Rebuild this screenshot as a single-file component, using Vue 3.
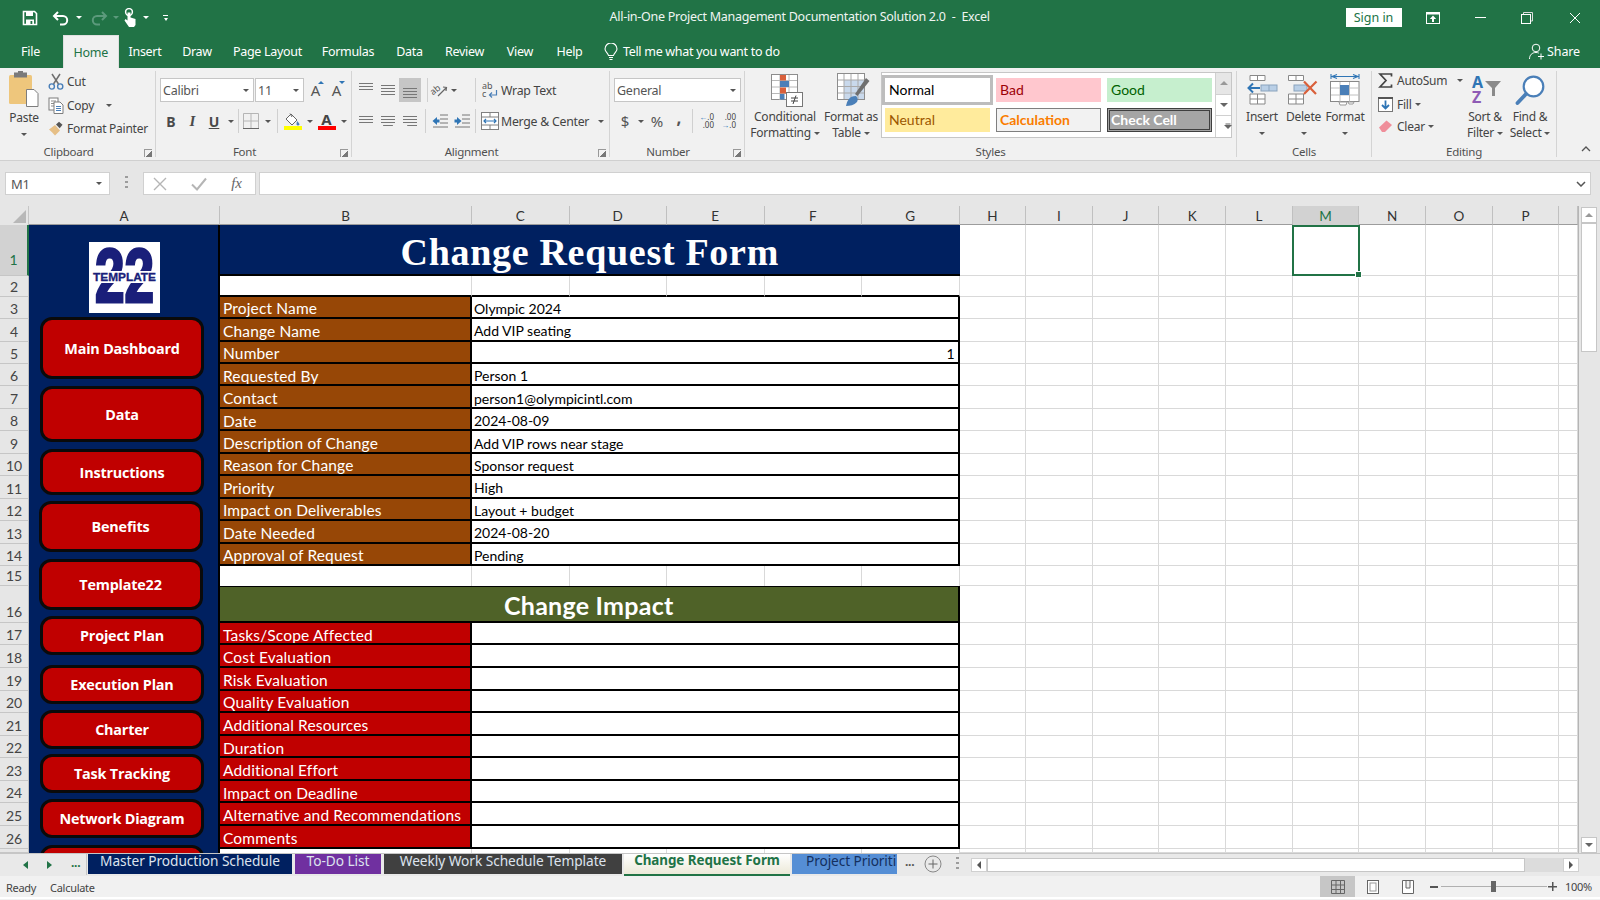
<template>
  <div class="excel">
    <!-- title bar -->
    <div class="titlebar">
      <div class="qat">
        <svg class="q-save" width="16" height="16" viewBox="0 0 16 16"><path d="M1.5 1.5h11l2 2v11h-13z" fill="none" stroke="#fff" stroke-width="1.6"/><rect x="4" y="2" width="7" height="4" fill="#fff"/><rect x="4" y="9.5" width="8" height="5" fill="#fff"/><rect x="8.5" y="11" width="1.8" height="3" fill="#217346"/></svg>
        <svg class="q-undo" width="18" height="16" viewBox="0 0 18 16"><path d="M6 2 2 6l4 4M2.5 6H11a4 4 0 0 1 0 8.400H8" fill="none" stroke="#fff" stroke-width="2"/></svg>
        <span class="caret white q-c1"></span>
        <svg class="q-redo" width="18" height="16" viewBox="0 0 18 16"><path d="M12 2l4 4-4 4M15.500 6H7a4 4 0 0 0 0 8.400h3" fill="none" stroke="#5c9a7c" stroke-width="2"/></svg>
        <span class="caret dim q-c2"></span>
        <svg class="q-touch" width="14" height="20" viewBox="0 0 14 20"><circle cx="6" cy="4" r="3.400" fill="none" stroke="#fff" stroke-width="1.500"/><path d="M4.500 4.500h3v5l5 1.500v6l-1.500 2H6L1.500 12.500l1-1.500 2 1.500z" fill="#fff"/></svg>
        <span class="caret white q-c3"></span>
        <span class="q-custom"><i></i><span class="caret white"></span></span>
      </div>
      <div class="doc-title">All-in-One Project Management Documentation Solution 2.0&nbsp; -&nbsp; Excel</div>
      <button class="signin">Sign in</button>
      <svg class="w-restore" width="14" height="12" viewBox="0 0 14 12"><rect x=".5" y=".5" width="13" height="11" fill="none" stroke="#fff"/><rect x=".5" y=".5" width="13" height="2" fill="#fff"/><path d="M7 3.500 3.800 7h2.200v3h2V7h2.200z" fill="#fff"/></svg>
      <svg class="w-min" width="11" height="2" viewBox="0 0 11 2"><rect width="11" height="1" fill="#fff"/></svg>
      <svg class="w-max" width="12" height="12" viewBox="0 0 12 12"><path d="M2.500 2.500V.5h9v8.500H9.500" fill="none" stroke="#ddd"/><rect x=".5" y="2.500" width="9" height="9" fill="none" stroke="#fff"/></svg>
      <svg class="w-close" width="12" height="12" viewBox="0 0 12 12"><path d="M1 1l10 10M11 1 1 11" stroke="#fff" stroke-width="1"/></svg>
    </div>

    <!-- ribbon tabs -->
    <div class="tabs">
      <span
        v-for="t in ribbonTabs"
        :key="t.name"
        class="rtab"
        :class="{ active: t.name === 'Home' }"
        :style="{ width: t.w + 'px' }"
      >{{ t.name }}</span>
      <svg class="bulb" width="14" height="18" viewBox="0 0 14 18"><path d="M4.500 12.500C4 10 1 8.800 1 6a6 6 0 0 1 12 0c0 2.800-3 4-3.500 6.500z" fill="none" stroke="#fff" stroke-width="1.100"/><path d="M5 14.500h4M5.500 16.500h3" stroke="#fff" stroke-width="1.100"/></svg>
      <span class="tell">Tell me what you want to do</span>
      <span class="share">
        <svg width="16" height="17" viewBox="0 0 16 17"><circle cx="7" cy="5" r="3.800" fill="none" stroke="#fff"/><path d="M.5 16c0-4 2.500-6.500 6.500-6.500 1 0 2 .2 2.800.6" fill="none" stroke="#fff"/><path d="M12 10.500v6M9 13.500h6" stroke="#fff"/></svg>
        Share
      </span>
    </div>

    <!-- ribbon -->
    <div class="ribbon">
      <!-- clipboard -->
      <div class="group g-clip">
        <div class="g-body">
          <div class="big paste">
            <div class="big-ico">
              <svg width="30" height="36" viewBox="0 0 30 36"><rect x="0" y="4" width="23" height="29" rx="1.500" fill="#eec67c"/><rect x="5" y="1.500" width="13" height="5" fill="#7a7a7a"/><rect x="9" y="0" width="5" height="3" fill="#7a7a7a"/><path d="M17.500 18.500H25l4 4v13H17.500z" fill="#fff" stroke="#7d7d7d"/></svg>
            </div>
            <span>Paste</span>
            <span class="line"><i class="caret"></i></span>
          </div>
          <div class="clip-rows">
            <div class="clip-row">
              <svg width="16" height="17" viewBox="0 0 16 17"><path d="M4 1l6.500 10M12 1 5.500 11" stroke="#6f6f6f" stroke-width="1.500"/><circle cx="3.800" cy="13.500" r="2.600" fill="none" stroke="#4a7fb8" stroke-width="1.400"/><circle cx="12.200" cy="13.500" r="2.600" fill="none" stroke="#4a7fb8" stroke-width="1.400"/></svg>
              <span>Cut</span>
            </div>
            <div class="clip-row">
              <svg width="16" height="17" viewBox="0 0 16 17"><rect x="1" y="1" width="9" height="12" fill="#fff" stroke="#7d7d7d"/><path d="M3 4h5M3 6.500h5M3 9h3" stroke="#8c8c8c"/><path d="M6 5h6l3 3v8.500H6z" fill="#fff" stroke="#7d7d7d"/><path d="M8 9.500h5M8 11.500h5M8 13.500h5" stroke="#4a7fb8"/></svg>
              <span>Copy</span><i class="caret copy-caret"></i>
            </div>
            <div class="clip-row">
              <svg width="16" height="15" viewBox="0 0 16 15"><path d="M1 8.500 7 4l5 5.500-5 5C5 12 3 10 1 8.500z" fill="#e6bf86"/><path d="M8 3.500l3-2.800 3.500 3-2.800 3.500z" fill="#555"/></svg>
              <span>Format Painter</span>
            </div>
          </div>
        </div>
        <div class="g-label">Clipboard</div>
        <i class="launcher"></i>
      </div>

      <!-- font -->
      <div class="group g-font">
        <div class="g-body rows">
          <div class="row">
            <div class="combo c-font"><span>Calibri</span><i class="caret"></i></div>
            <div class="combo c-size"><span>11</span><i class="caret"></i></div>
            <span class="btn grow-a"><b>A</b><i class="tri up"></i></span>
            <span class="btn grow-a"><b>A</b><i class="tri down"></i></span>
          </div>
          <div class="row">
            <span class="btn strong">B</span>
            <span class="btn strong it">I</span>
            <span class="btn strong ul">U</span>
            <i class="caret cbox"></i>
            <i class="sep s1"></i>
            <span class="btn">
              <svg width="16" height="16" viewBox="0 0 16 16"><path d="M.5.500h15v15H.5zM8 .5v15M.5 8h15" fill="none" stroke="#b5b5b5"/><path d="M0 15.500h16" stroke="#666"/></svg>
            </span>
            <i class="caret cbox"></i>
            <i class="sep s2"></i>
            <span class="btn color-btn">
              <svg width="18" height="13" viewBox="0 0 18 13"><path d="M7 1l6 6-5 5-6-6z" fill="#fff" stroke="#666"/><path d="M6 .5 8 4" stroke="#666"/><path d="M13 8c1.500 1.500 2.500 2.500 2.500 3.500a1.600 1.600 0 0 1-3 0c0-1 .3-2 .5-3.500z" fill="#4a7fb8"/></svg>
              <i class="swatch yellow"></i>
            </span>
            <i class="caret cbox tight"></i>
            <span class="btn color-btn">
              <b class="fc-a">A</b>
              <i class="swatch red"></i>
            </span>
            <i class="caret cbox tight"></i>
          </div>
        </div>
        <div class="g-label">Font</div>
        <i class="launcher"></i>
      </div>

      <!-- alignment -->
      <div class="group g-align">
        <div class="g-body rows">
          <div class="row">
            <span class="btn"><i class="lines top"></i></span>
            <span class="btn"><i class="lines mid"></i></span>
            <span class="btn on"><i class="lines bot"></i></span>
            <i class="sep s3"></i>
            <span class="btn">
              <svg class="open" width="18" height="16" viewBox="0 0 18 16"><text x="1" y="10" transform="rotate(-40 7 9)" class="tiny-ico">ab</text><path d="M8 14 16 6M13 5l3.500.5L16 9" fill="none" stroke="#666" stroke-width="1.200"/></svg>
            </span>
            <i class="caret small-c"></i>
            <i class="sep s4"></i>
            <span class="wrap-item">
              <svg class="open" width="18" height="18" viewBox="0 0 18 18"><text x="1" y="8" class="tiny-ico">ab</text><text x="1" y="16" class="tiny-ico">c</text><path d="M15.500 9v5H8.500M11 11.500 8.500 14l2.500 2.500" fill="none" stroke="#4a7fb8" stroke-width="1.200"/></svg>
              <span>Wrap Text</span>
            </span>
          </div>
          <div class="row">
            <span class="btn"><i class="lines left"></i></span>
            <span class="btn"><i class="lines center"></i></span>
            <span class="btn"><i class="lines right"></i></span>
            <i class="sep s5"></i>
            <span class="btn ind">
              <svg width="16" height="16" viewBox="0 0 16 16"><path d="M8 2h8M8 6h8M8 10h8M1 14h15" stroke="#777"/><path d="M.5 8 5 4v2.500h2.500v3H5V12z" fill="#2f75b5"/></svg>
            </span>
            <span class="btn">
              <svg width="16" height="16" viewBox="0 0 16 16"><path d="M8 2h8M8 6h8M8 10h8M1 14h15" stroke="#777"/><path d="M7.500 8 3 4v2.500H.5v3H3V12z" fill="#2f75b5"/></svg>
            </span>
            <i class="sep s6"></i>
            <span class="wrap-item">
              <svg width="18" height="18" viewBox="0 0 18 18"><rect x=".5" y=".5" width="17" height="17" fill="#fff" stroke="#808080"/><path d="M.5 5h17M.5 13h17M9 1v4M9 13v4" stroke="#808080"/><path d="M3 9h12M5 7 3 9l2 2M13 7l2 2-2 2" fill="none" stroke="#2f75b5" stroke-width="1.200"/></svg>
              <span>Merge &amp; Center</span>
              <i class="caret merge-c"></i>
            </span>
          </div>
        </div>
        <div class="g-label">Alignment</div>
        <i class="launcher"></i>
      </div>

      <!-- number -->
      <div class="group g-num">
        <div class="g-body rows">
          <div class="row">
            <div class="combo c-num"><span>General</span><i class="caret"></i></div>
          </div>
          <div class="row">
            <span class="btn sym">$</span>
            <i class="caret cbox tight"></i>
            <span class="btn sym">%</span>
            <span class="btn sym comma">,</span>
            <i class="sep s7"></i>
            <span class="btn dec"><em class="arrow-blue">←</em>.0<br>.00</span>
            <span class="btn dec">.00<br><em class="arrow-blue">→</em>.0</span>
          </div>
        </div>
        <div class="g-label">Number</div>
        <i class="launcher"></i>
      </div>

      <!-- styles -->
      <div class="group g-styles">
        <div class="g-body">
          <div class="big b-cf">
            <div class="big-ico">
              <svg width="32" height="33" viewBox="0 0 32 33"><rect x=".5" y=".5" width="26" height="25" fill="#fff" stroke="#8d8d8d"/><path d="M9 1v25M18 1v25M1 6.500h25M1 13h25M1 19.500h25" stroke="#b8b8b8"/><rect x="9" y="1" width="6" height="5.500" fill="#d9603b"/><rect x="9" y="7" width="9" height="6" fill="#4a7fb8"/><rect x="9" y="13.500" width="6" height="6" fill="#d9603b"/><rect x="9" y="20" width="4.500" height="5.500" fill="#4a7fb8"/><rect x="15.500" y="18.500" width="16" height="14" fill="#fff" stroke="#777"/><path d="M20 24h7M20 27h7M25 21.500l-3 8.500" stroke="#444" fill="none"/></svg>
            </div>
            <span>Conditional</span>
            <span class="line">Formatting <i class="caret"></i></span>
          </div>
          <div class="big b-ft">
            <div class="big-ico">
              <svg width="33" height="34" viewBox="0 0 33 34"><rect x=".5" y=".5" width="27" height="26" fill="#fff" stroke="#8d8d8d"/><rect x="7" y="7" width="20" height="19" fill="#c9d9ec"/><path d="M7 1v25M14 1v25M21 1v25M1 7h26M1 13.500h26M1 20h26" stroke="#a9a9a9"/><path d="M18 21 29 5l3.500 3-12 15z" fill="#6f6f6f"/><path d="M9 33c1-5 3-10 10-10 2 2 2 4 1 6-3 3-7 4-11 4z" fill="#4a7fb8"/></svg>
            </div>
            <span>Format as</span>
            <span class="line">Table <i class="caret"></i></span>
          </div>
          <div class="gallery">
            <div class="swatches">
              <div class="st st-normal">Normal</div>
              <div class="st st-bad">Bad</div>
              <div class="st st-good">Good</div>
              <div class="st st-neutral">Neutral</div>
              <div class="st st-calc">Calculation</div>
              <div class="st st-check">Check Cell</div>
            </div>
            <div class="g-scroll">
              <span class="disabled"><i class="tri-s up"></i></span>
              <span><i class="tri-s"></i></span>
              <span><i class="tri-s more"></i></span>
            </div>
          </div>
        </div>
        <div class="g-label">Styles</div>
      </div>

      <!-- cells -->
      <div class="group g-cells">
        <div class="g-body">
          <div class="big b-cell">
            <div class="big-ico">
              <svg width="31" height="30" viewBox="0 0 31 30"><path d="M3 .5h15v5H3zM10.500.5v5M3 19h15v10H3zM3 24h15M10.500 19v10" fill="#fff" stroke="#888"/><rect x="14" y="10" width="16" height="6" fill="#b9cfe6" stroke="#8aa3bd"/><path d="M22 10v6" stroke="#8aa3bd"/><path d="M13 13H2M6 8.500 1.500 13 6 17.500" fill="none" stroke="#2f75b5" stroke-width="2"/></svg>
            </div>
            <span>Insert</span>
            <span class="line"><i class="caret"></i></span>
          </div>
          <div class="big b-cell narrow">
            <div class="big-ico">
              <svg width="31" height="30" viewBox="0 0 31 30"><path d="M.5.500h15v5H.5zM8 .5v5M.5 19h15v10H.5zM.5 24h15M8 19v10" fill="#fff" stroke="#888"/><rect x="6" y="10" width="13" height="6" fill="#b9cfe6" stroke="#8aa3bd"/><path d="M16 6.500 28 19M28.500 6.500 16 19" stroke="#d9603b" stroke-width="2.200"/></svg>
            </div>
            <span>Delete</span>
            <span class="line"><i class="caret"></i></span>
          </div>
          <div class="big b-cell">
            <div class="big-ico">
              <svg width="30" height="32" viewBox="0 0 30 32"><path d="M1 0v5M29 0v5M2 2.500h26M7 .5 2 2.500 7 4.500M23 .5l5 2-5 2" fill="none" stroke="#2f75b5" stroke-width="1.100"/><rect x=".5" y="7.500" width="28.500" height="20" fill="#fff" stroke="#888"/><path d="M10 8v20M19.500 8v20M1 14h28M1 21h28" stroke="#c0c0c0"/><rect x="10" y="11" width="9" height="10" fill="#4a7fb8"/><path d="M9 28h8l-1 3H10zM18 28h6l-1 2h-4z" fill="#fff" stroke="#999"/></svg>
            </div>
            <span>Format</span>
            <span class="line"><i class="caret"></i></span>
          </div>
        </div>
        <div class="g-label">Cells</div>
      </div>

      <!-- editing -->
      <div class="group g-edit">
        <div class="g-body">
          <div class="edit-rows">
            <div class="edit-row">
              <svg width="14" height="15" viewBox="0 0 14 15"><path d="M13 3.500V1H1.500l6 6.500-6 6.500H13v-2.500" fill="none" stroke="#444" stroke-width="1.700"/></svg>
              <span>AutoSum</span><i class="caret sum-c"></i>
            </div>
            <div class="edit-row">
              <svg width="15" height="15" viewBox="0 0 15 15"><rect x=".5" y=".5" width="14" height="14" fill="#fff" stroke="#777"/><path d="M0 1h15" stroke="#555" stroke-width="2"/><path d="M7.500 3.500v8M4 8l3.500 3.500L11 8" fill="none" stroke="#2f75b5" stroke-width="1.800"/></svg>
              <span>Fill</span><i class="caret fill-c"></i>
            </div>
            <div class="edit-row">
              <svg width="15" height="14" viewBox="0 0 15 14"><path d="M1 8.500 8.500 1.500 14 6 7 13H4z" fill="#ef8e9a"/></svg>
              <span>Clear</span><i class="caret fill-c"></i>
            </div>
          </div>
          <div class="big b-sort">
            <div class="big-ico sort-ico">
              <svg width="32" height="32" viewBox="0 0 32 32"><text x="3" y="14" class="az a">A</text><text x="3" y="29" class="az z">Z</text><path d="M16 7h16l-6 7v8h-3v-8z" fill="#8a8a8a"/></svg>
            </div>
            <span>Sort &amp;</span>
            <span class="line">Filter <i class="caret"></i></span>
          </div>
          <div class="big b-find">
            <div class="big-ico">
              <svg width="30" height="31" viewBox="0 0 30 31"><circle cx="18.500" cy="11.500" r="9.800" fill="#fff" stroke="#4a7fb8" stroke-width="2.200"/><path d="M11 19 2.500 28" stroke="#4a7fb8" stroke-width="3.800" stroke-linecap="round"/></svg>
            </div>
            <span>Find &amp;</span>
            <span class="line">Select <i class="caret"></i></span>
          </div>
        </div>
        <div class="g-label">Editing</div>
      </div>
      <svg class="collapse" width="10" height="6" viewBox="0 0 10 6"><path d="M1 5l4-4 4 4" fill="none" stroke="#555" stroke-width="1.300"/></svg>
    </div>

    <!-- formula bar -->
    <div class="formula">
      <div class="namebox"><span>M1</span><i class="caret"></i></div>
      <i class="grip"></i>
      <div class="fx-box">
        <svg width="14" height="14" viewBox="0 0 14 14"><path d="M1 1l12 12M13 1 1 13" stroke="#b5b5b5" stroke-width="1.400"/></svg>
        <svg width="16" height="14" viewBox="0 0 16 14"><path d="M1 7.500 6 12.500 15 1.500" fill="none" stroke="#b5b5b5" stroke-width="2"/></svg>
        <span class="fx">fx</span>
      </div>
      <div class="finput"><svg width="10" height="6" viewBox="0 0 10 6"><path d="M1 1l4 4 4-4" fill="none" stroke="#555" stroke-width="1.500"/></svg></div>
    </div>

    <!-- sheet -->
    <div class="sheet">
      <div class="sheet-main">
        <div class="col-heads">
          <div class="corner"><i></i></div>
          <div v-for="c in columns" :key="c" class="ch" :class="{ sel: c === 'M' }">{{ c }}</div>
          <div class="ch"></div>
        </div>
        <div class="cells">
          <div class="side">
            <svg class="logo" width="71" height="71" viewBox="0 0 71 71">
              <rect width="71" height="71" fill="#fff"/>
              <text x="6" y="60" textLength="59" lengthAdjust="spacingAndGlyphs" class="logo-num">22</text>
              <rect x="2" y="29" width="67" height="12" fill="#fff"/>
              <text x="4" y="39" textLength="63" lengthAdjust="spacingAndGlyphs" class="logo-word">TEMPLATE</text>
            </svg>
            <div
              v-for="b in sideButtons"
              :key="b.label"
              class="side-btn"
              :class="{ shift: b.shift }"
              :style="{ height: b.h + 'px', marginTop: b.gap + 'px' }"
            >{{ b.label }}</div>
          </div>
          <template v-for="r in rows" :key="r.n">
            <div class="rh" :class="{ sel: r.n === 1, tall: r.n === 16 }">{{ r.n }}</div>
            <div
              v-for="(cell, i) in r.cells"
              :key="i"
              class="cell"
              :class="cell.cls"
            ><span v-if="cell.text">{{ cell.text }}</span><i v-if="cell.cls.includes('selected')" class="fill-handle"></i></div>
          </template>
        </div>
      </div>
      <div class="vscroll">
        <span class="arrow"><i class="tri-s up"></i></span>
        <span class="thumb"></span>
        <span class="track"></span>
        <span class="arrow"><i class="tri-s"></i></span>
      </div>
    </div>

    <!-- sheet tabs -->
    <div class="sheetbar">
      <div class="nav">
        <i class="nav-l"></i><i class="nav-r"></i><span>...</span>
      </div>
      <div class="stabs">
        <div v-for="t in sheetTabs" :key="t.name" class="stab" :class="t.cls">{{ t.name }}</div>
      </div>
      <span class="more">...</span>
      <span class="add"><svg width="18" height="18" viewBox="0 0 18 18"><circle cx="9" cy="9" r="8" fill="none" stroke="#888"/><path d="M9 4.500v9M4.500 9h9" stroke="#666"/></svg></span>
      <i class="grip"></i>
      <div class="hscroll">
        <span class="h-arrow"><i class="tri-h left"></i></span>
        <span class="h-thumb"></span>
        <span class="h-track"></span>
        <span class="h-arrow"><i class="tri-h"></i></span>
      </div>
    </div>

    <!-- status bar -->
    <div class="status">
      <span>Ready</span>
      <span class="calc">Calculate</span>
      <div class="views">
        <span class="view on"><svg width="14" height="14" viewBox="0 0 14 14"><path d="M.5.500h13v13H.5zM.5 5h13M.5 9.500h13M5 .5v13M9.500.5v13" fill="none" stroke="#666"/></svg></span>
        <span class="view"><svg width="14" height="14" viewBox="0 0 14 14"><rect x="1.500" y=".5" width="11" height="13" fill="#fff" stroke="#666"/><rect x="4" y="3" width="6" height="8" fill="none" stroke="#999"/></svg></span>
        <span class="view"><svg width="14" height="14" viewBox="0 0 14 14"><path d="M1.500.5h11v13h-11zM5 .5v7.500h4V.5" fill="#fff" stroke="#666"/></svg></span>
      </div>
      <div class="zoom">
        <i class="z-minus"></i>
        <div class="slider"><i></i></div>
        <i class="z-plus"></i>
        <span>100%</span>
      </div>
    </div>
    <div class="strip"></div>
  </div>
</template>

<script setup>
// widths keep the tab labels at their places in the bar
const ribbonTabs = [
  { name: 'File', w: 41 },
  { name: 'Home', w: 55.6 },
  { name: 'Insert', w: 52.8 },
  { name: 'Draw', w: 51.2 },
  { name: 'Page Layout', w: 89.8 },
  { name: 'Formulas', w: 71.2 },
  { name: 'Data', w: 51.8 },
  { name: 'Review', w: 58.2 },
  { name: 'View', w: 52.8 },
  { name: 'Help', w: 46.2 }
]

const columns = 'ABCDEFGHIJKLMNOP'.split('')

const sideButtons = [
  { label: 'Main Dashboard', h: 62, gap: 92 },
  { label: 'Data', h: 56, gap: 7 },
  { label: 'Instructions', h: 46, gap: 7 },
  { label: 'Benefits', h: 51, gap: 6, shift: true },
  { label: 'Template22', h: 51, gap: 7, shift: true },
  { label: 'Project Plan', h: 39, gap: 6 },
  { label: 'Execution Plan', h: 39, gap: 10 },
  { label: 'Charter', h: 39, gap: 6 },
  { label: 'Task Tracking', h: 39, gap: 5 },
  { label: 'Network Diagram', h: 39, gap: 6 },
  { label: '', h: 39, gap: 7 }
]

const sheetTabs = [
  { name: 'Master Production Schedule', cls: 'navy' },
  { name: 'To-Do List', cls: 'purple' },
  { name: 'Weekly Work Schedule Template', cls: 'dark' },
  { name: 'Change Request Form', cls: 'active' },
  { name: 'Project Prioriti', cls: 'sky' }
]

const formInfo = [
  ['Project Name', 'Olympic 2024'],
  ['Change Name', 'Add VIP seating'],
  ['Number', '1'],
  ['Requested By', 'Person 1'],
  ['Contact', 'person1@olympicintl.com'],
  ['Date', '2024-08-09'],
  ['Description of Change', 'Add VIP rows near stage'],
  ['Reason for Change', 'Sponsor request'],
  ['Priority', 'High'],
  ['Impact on Deliverables', 'Layout + budget'],
  ['Date Needed', '2024-08-20'],
  ['Approval of Request', 'Pending']
]

const impactLabels = [
  'Tasks/Scope Affected',
  'Cost Evaluation',
  'Risk Evaluation',
  'Quality Evaluation',
  'Additional Resources',
  'Duration',
  'Additional Effort',
  'Impact on Deadline',
  'Alternative and Recommendations',
  'Comments'
]

// empty cells H..Q for a row
const blanks = (first) => {
  const list = []
  for (let i = 0; i < 10; i++) {
    list.push({ cls: first && i === 5 ? 'grid-cell selected' : 'grid-cell' })
  }
  return list
}

const spacer = (extra) => {
  const list = []
  for (let i = 0; i < 6; i++) list.push({ cls: 'spacer ' + extra + (i === 5 ? ' last' : '') })
  return list
}

const rows = []
rows.push({ n: 1, cells: [{ cls: 'title span6', text: 'Change Request Form' }, ...blanks(true)] })
rows.push({ n: 2, cells: [...spacer('closed'), ...blanks()] })
formInfo.forEach(([label, value], i) => {
  rows.push({
    n: i + 3,
    cells: [
      { cls: 'label brown', text: label },
      { cls: 'value span5' + (value === '1' ? ' num' : ''), text: value },
      ...blanks()
    ]
  })
})
rows.push({ n: 15, cells: [...spacer(''), ...blanks()] })
rows.push({ n: 16, cells: [{ cls: 'impact span6', text: 'Change Impact' }, ...blanks()] })
impactLabels.forEach((label, i) => {
  rows.push({
    n: i + 17,
    cells: [
      { cls: 'label red', text: label },
      { cls: 'value span5' },
      ...blanks()
    ]
  })
})
rows.push({ n: 27, cells: [...spacer(''), ...blanks()] })
</script>

<style>
html, body {
  margin: 0;
  background: #fff;
  overflow: hidden;
}
</style>

<style scoped>
.excel {
  width: 1600px;
  height: 900px;
  display: flex;
  flex-direction: column;
  overflow: hidden;
  font-family: "Noto Sans", "Open Sans", sans-serif;
  font-size: 12px;
  letter-spacing: -0.25px;
  color: #444;
  background: #f1f1f1;
}

i { font-style: normal; display: block; }
svg.open { overflow: visible; }

/* title bar */
.titlebar {
  height: 35px;
  background: #217346;
  color: #fff;
  display: flex;
  align-items: center;
  flex: none;
}
.qat {
  display: flex;
  align-items: center;
  width: 600px;
  padding-left: 22px;
  box-sizing: border-box;
}
.q-undo { margin-left: 14px; }
.q-c1 { margin-left: 6px; }
.q-redo { margin-left: 8px; }
.q-c2 { margin-left: 5px; }
.q-touch { margin-left: 4px; }
.q-c3 { margin-left: 6px; }
.q-custom { margin-left: 14px; display: flex; flex-direction: column; gap: 2px; align-items: center; }
.q-custom i:first-child { width: 5px; height: 1px; background: #fff; }
.q-custom .caret { border-width: 3px 2.5px 0; }
.doc-title {
  margin-left: 9.5px;
  padding-bottom: 2px;
  font-size: 12.500px;
  letter-spacing: -0.27px;
  white-space: nowrap;
  width: 736px;
  color: #f0f5f2;
}
.signin {
  width: 56px;
  height: 19px;
  border: 0;
  padding: 0;
  background: #fff;
  color: #217346;
  font: 12.500px "Noto Sans", sans-serif;
  letter-spacing: 0;
}
.w-restore { margin-left: 24px; }
.w-min { margin-left: 35px; }
.w-max { margin-left: 35.500px; }
.w-close { margin-left: 36px; }

/* ribbon tabs */
.tabs {
  height: 33px;
  background: #217346;
  color: #fff;
  display: flex;
  align-items: center;
  padding-left: 10px;
  font-size: 12.500px;
  letter-spacing: -0.3px;
  flex: none;
  box-sizing: border-box;
}
.rtab {
  flex: none;
  height: 33px;
  line-height: 34px;
  box-sizing: border-box;
  white-space: nowrap;
  text-align: center;
}
.rtab.active {
  background: #f1f1f1;
  color: #217346;
  border: 1px solid #e0e0e0;
  border-bottom: 0;
  margin-left: 12px;
  line-height: 33px;
}
.bulb { margin-left: 11.400px; flex: none; }
.tell { margin-left: 5px; white-space: nowrap; }
.share {
  margin-left: auto;
  margin-right: 20px;
  display: flex;
  align-items: center;
  gap: 2px;
  font-size: 12.500px;
  letter-spacing: -0.13px;
}

/* ribbon */
.ribbon {
  height: 93px;
  background: #f1f1f1;
  border-bottom: 1px solid #d0d0d0;
  display: flex;
  padding-top: 3px;
  box-sizing: border-box;
  flex: none;
  position: relative;
}
.group {
  height: 86px;
  border-right: 1px solid #d4d4d4;
  box-sizing: border-box;
  position: relative;
  flex: none;
}
.g-clip { width: 156px; }
.g-font { width: 196px; padding-left: 4px; }
.g-align { width: 258px; padding-left: 3px; }
.g-num { width: 135px; padding-left: 4px; }
.g-styles { width: 492px; }
.g-cells { width: 135px; padding-left: 4px; }
.g-edit { width: 185px; padding-left: 4px; }
.g-body {
  height: 74px;
  display: flex;
  white-space: nowrap;
}
.g-label {
  position: absolute;
  left: 0;
  right: 0;
  bottom: -1px;
  height: 12px;
  line-height: 12px;
  text-align: center;
  font-size: 11.500px;
  color: #505050;
}
.g-clip .g-label, .g-font .g-label, .g-align .g-label, .g-num .g-label { right: 18px; }
.launcher {
  position: absolute;
  right: 3px;
  bottom: 0;
  width: 7px;
  height: 7px;
  border-top: 1px solid #999;
  border-left: 1px solid #999;
  background: linear-gradient(135deg, transparent 55%, #777 55%);
}
.collapse { position: absolute; right: 9px; bottom: 8px; }

.caret {
  display: inline-block;
  width: 0;
  height: 0;
  border-style: solid;
  border-width: 3px 3px 0;
  border-color: #555 transparent transparent;
  vertical-align: middle;
}
.caret.white { border-top-color: #fff; }
.caret.dim { border-top-color: #5c9a7c; }

/* big buttons */
.big {
  display: flex;
  flex-direction: column;
  align-items: center;
  line-height: 16px;
  flex: none;
}
.big-ico {
  height: 38px;
  display: flex;
  align-items: center;
  justify-content: center;
}
.line { height: 16px; }
.paste { width: 48px; }
.paste .big-ico { height: 39px; align-items: flex-start; }
.clip-rows { display: flex; flex-direction: column; margin-top: -1px; }
.clip-row {
  height: 23.500px;
  display: flex;
  align-items: center;
  gap: 3px;
}
.copy-caret { margin-left: 9px; }

/* rows of small tools */
.rows { flex-direction: column; }
.row {
  height: 24px;
  display: flex;
  align-items: center;
  margin-top: 7px;
}
.row + .row { margin-top: 7px; }
.combo {
  height: 24px;
  background: #fff;
  border: 1px solid #c6c6c6;
  box-sizing: border-box;
  display: flex;
  align-items: center;
  justify-content: space-between;
  padding: 0 4px 0 2px;
  flex: none;
  font-size: 12.500px;
  color: #555;
}
.c-font { width: 94px; }
.c-size { width: 49px; margin-left: 1px; }
.c-num { width: 127px; }
.btn {
  width: 22px;
  height: 24px;
  flex: none;
  display: flex;
  align-items: center;
  justify-content: center;
  position: relative;
  box-sizing: border-box;
}
.btn.on { background: #c6c6c6; border: 1px solid #c6c6c6; }
.strong {
  font: bold 14px "Noto Sans", sans-serif;
  color: #4a4a4a;
  letter-spacing: 0;
  margin-right: -0.5px;
}
.it { font-style: italic; font-family: "Liberation Serif", serif; font-size: 15px; }
.ul { text-decoration: underline; }
.cbox { flex: none; margin: 0 3.500px; }
.cbox.tight { margin: 0 2px; }
.grow-a {
  width: 21px;
  font-size: 15px;
  letter-spacing: 0;
}
.grow-a:first-of-type { margin-left: 1px; }
.grow-a b { font-weight: 400; color: #555; }
.tri { position: absolute; top: 3px; right: 2px; width: 0; height: 0; border-style: solid; border-width: 0 3px 3px; border-color: transparent transparent #2f75b5; }
.tri.down { border-width: 3px 3px 0; border-color: #2f75b5 transparent transparent; }
.sep { width: 1px; height: 24px; background: #d0d0d0; flex: none; }
.s1 { margin: 0 1px 0 0; }
.s2 { margin: 0 3px 0 2px; }
.s3 { margin: 0 0 0 6px; }
.s4 { margin: 0 0 0 18px; }
.s5 { margin: 0 3px 0 4px; }
.s6 { margin: 0 0 0 2px; }
.s7 { margin: 0 2px 0 2px; }
.small-c { flex: none; margin-left: 1px; }
.color-btn { flex-direction: column; gap: 0; justify-content: center; width: 24px; }
.swatch { width: 18px; height: 4px; }
.swatch.yellow { background: #ffff00; }
.swatch.red { background: #ff0000; }
.fc-a { font: 700 15px/14px "Noto Sans", sans-serif; color: #444; letter-spacing: 0; }
.lines {
  width: 14px;
  height: 10px;
  position: relative;
  background: repeating-linear-gradient(#777 0 1px, transparent 1px 3px);
}
.lines.top { width: 14px; margin-top: -8px; height: 7px; }
.lines.mid { width: 14px; }
.lines.bot { width: 14px; margin-top: 6px; }
.lines.left { clip-path: polygon(0 0, 100% 0, 100% 10%, 70% 10%, 70% 30%, 100% 30%, 100% 70%, 70% 70%, 70% 90%, 0 90%); height: 10px; }
.lines.center { clip-path: polygon(0 0, 100% 0, 100% 10%, 85% 10%, 85% 30%, 100% 30%, 100% 70%, 85% 70%, 85% 100%, 15% 100%, 15% 70%, 0 70%, 0 30%, 15% 30%, 15% 10%, 0 10%); }
.lines.right { clip-path: polygon(0 0, 100% 0, 100% 100%, 30% 100%, 30% 70%, 0 70%, 0 30%, 30% 30%, 30% 10%, 0 10%); }
.tiny-ico { font: 9px "Noto Sans", sans-serif; fill: #555; letter-spacing: 0; }
.wrap-item {
  display: flex;
  align-items: center;
  margin-left: 5px;
  gap: 2px;
  font-size: 12.300px;
}
.merge-c { margin-left: 7px; }
.sym { font-size: 15px; color: #555; letter-spacing: 0; }
.comma { font-weight: 700; font-size: 17px; padding-bottom: 8px; box-sizing: border-box; }
.dec {
  display: block;
  font-size: 8px;
  line-height: 8px;
  text-align: right;
  padding: 4px 3px 0 0;
  letter-spacing: 0;
}
.dec em { font-style: normal; }
.arrow-blue { color: #2f75b5; font-weight: 700; }

/* styles */
.b-cf { width: 80px; }
.b-ft { width: 52px; }
.b-cf svg, .b-ft svg { margin-left: 4px; }
.gallery {
  width: 351px;
  height: 66px;
  margin-left: 4px;
  margin-top: 1px;
  background: #fff;
  border: 1px solid #c6c6c6;
  box-sizing: border-box;
  display: flex;
  flex: none;
}
.swatches {
  display: grid;
  grid-template-columns: 105px 105px 105px;
  grid-template-rows: 24px 24px;
  column-gap: 6px;
  row-gap: 6px;
  padding: 5px 0 0 3px;
  width: 334px;
  box-sizing: border-box;
}
.st {
  font: 14px/24px Lato, sans-serif;
  padding-left: 4px;
  box-sizing: border-box;
  letter-spacing: 0;
}
.st-normal { background: #fff; color: #000; box-shadow: 0 0 0 3px #bdbdbd; }
.st-bad { background: #ffc7ce; color: #9c0006; }
.st-good { background: #c6efce; color: #006100; }
.st-neutral { background: #ffeb9c; color: #9c5700; }
.st-calc { background: #f2f2f2; color: #fa7d00; font-weight: 700; border: 1px solid #7f7f7f; line-height: 22px; padding-left: 3px; }
.st-check { background: #a5a5a5; color: #fff; font-weight: 700; border: 3px double #3f3f3f; line-height: 18px; padding-left: 1px; }
.g-scroll {
  width: 15px;
  display: flex;
  flex-direction: column;
  border-left: 1px solid #d0d0d0;
}
.g-scroll span {
  flex: 1;
  display: flex;
  align-items: center;
  justify-content: center;
  border-bottom: 1px solid #d0d0d0;
}
.g-scroll span:last-child { border-bottom: 0; }
.g-scroll .disabled { background: #e6e6e6; }
.tri-s {
  width: 0;
  height: 0;
  border-style: solid;
  border-width: 4px 4px 0;
  border-color: #666 transparent transparent;
}
.tri-s.up { border-width: 0 4px 4px; border-color: transparent transparent #999; }
.tri-s.more { box-shadow: 0 -3px 0 -1.500px #666; }

/* cells + editing */
.b-cell { width: 42px; }
.b-cell.narrow { width: 41px; }
.edit-rows { width: 89px; flex: none; }
.edit-row {
  height: 22.500px;
  display: flex;
  align-items: center;
  gap: 4px;
  padding-left: 2px;
}
.edit-row:first-child { margin-top: -2px; margin-bottom: 2px; }
.edit-row:last-child { margin-top: -1px; }
.edit-row svg { width: 15px; flex: none; }
.sum-c { margin-left: 6px; }
.fill-c { margin-left: -1px; }
.b-sort { width: 40px; }
.b-find { width: 50px; }
.az { font: 700 16px "Noto Sans", sans-serif; letter-spacing: 0; }
.az.a { fill: #2f75b5; }
.az.z { fill: #8e5bb5; }

/* formula bar */
.formula {
  height: 45px;
  background: #e6e6e6;
  display: flex;
  padding: 11px 9px 11px 5px;
  box-sizing: border-box;
  flex: none;
}
.namebox {
  width: 105px;
  background: #fff;
  border: 1px solid #d0d0d0;
  box-sizing: border-box;
  display: flex;
  align-items: center;
  justify-content: space-between;
  padding: 0 7px 0 5px;
  font-size: 13px;
  color: #555;
  flex: none;
}
.grip {
  width: 3px;
  height: 15px;
  margin: 4px 15px 0 15px;
  background: repeating-linear-gradient(#9c9c9c 0 2px, transparent 2px 5px);
  flex: none;
}
.fx-box {
  width: 113px;
  background: #fff;
  border: 1px solid #d0d0d0;
  box-sizing: border-box;
  display: flex;
  align-items: center;
  justify-content: space-between;
  padding: 0 13px 0 9px;
  flex: none;
}
.fx {
  font: italic 15px "Liberation Serif", serif;
  color: #666;
  letter-spacing: 0;
}
.finput {
  flex: 1;
  margin-left: 3px;
  background: #fff;
  border: 1px solid #d0d0d0;
  box-sizing: border-box;
  display: flex;
  align-items: center;
  justify-content: flex-end;
  padding-right: 4px;
}

/* sheet */
.sheet {
  height: 647px;
  display: flex;
  background: #e6e6e6;
  flex: none;
}
.sheet-main {
  width: 1578px;
  flex: none;
  overflow: hidden;
  background: #fff;
  border-right: 1px solid #b5b5b5;
  box-sizing: content-box;
}
.col-heads, .cells {
  display: grid;
  grid-template-columns: 29px 191px 252px repeat(5, 97.500px) repeat(9, 66.670px) 18.470px;
}
.col-heads {
  height: 19px;
  background: #e6e6e6;
  font-family: Lato, sans-serif;
  letter-spacing: 0;
}
.corner { position: relative; border-right: 1px solid #c6c6c6; overflow: hidden; }
.corner i {
  position: absolute;
  right: 2px;
  bottom: 2px;
  width: 0;
  height: 0;
  border-style: solid;
  border-width: 0 0 13px 13px;
  border-color: transparent transparent #b8b8b8;
}
.ch {
  border-right: 1px solid #c0c0c0;
  border-bottom: 1px solid #9c9c9c;
  box-sizing: border-box;
  text-align: center;
  font-size: 13.500px;
  line-height: 21px;
  color: #333;
  overflow: hidden;
}
.ch.sel { background: #d2d2d2; color: #217346; border-bottom: 0; }
.cells {
  grid-template-rows: 51px 20.700px repeat(12, 22.450px) 19.800px 37px repeat(10, 22.600px) 4px;
  position: relative;
  font-family: Lato, sans-serif;
  letter-spacing: 0;
}
.side {
  grid-column: 2;
  grid-row: 1 / span 27;
  background: #002060;
  overflow: hidden;
  border-right: 2px solid #000;
  box-sizing: border-box;
  display: flex;
  flex-direction: column;
  position: relative;
}
.logo {
  position: absolute;
  left: 60px;
  top: 17px;
}
.logo-num {
  font: 700 76px "Liberation Sans", sans-serif;
  fill: #1a1f7a;
  stroke: #1a1f7a;
  stroke-width: 3px;
}
.logo-word {
  font: 700 11px "Liberation Sans", sans-serif;
  fill: #1a1f7a;
  stroke: #1a1f7a;
  stroke-width: .3px;
}
.side-btn {
  flex: none;
  margin-left: 11px;
  width: 164px;
  background: #c00000;
  border: 3px solid #0a0a0a;
  border-radius: 12px;
  box-sizing: border-box;
  color: #fff;
  font: 700 14.400px "Open Sans", sans-serif;
  letter-spacing: -0.2px;
  display: flex;
  align-items: center;
  justify-content: center;
}
.side-btn.shift { margin-left: 9.500px; }
.rh {
  grid-column: 1;
  background: #e6e6e6;
  border-right: 1px solid #c0c0c0;
  border-bottom: 1px solid #c6c6c6;
  box-sizing: border-box;
  display: flex;
  align-items: flex-end;
  justify-content: center;
  font-size: 14px;
  line-height: 18px;
  color: #444;
  overflow: hidden;
}
.rh.sel { background: #d2d2d2; color: #217346; border-right: 2px solid #217346; padding-bottom: 6px; }
.rh.tall { padding-bottom: 1px; }
.cell {
  box-sizing: border-box;
  min-width: 0;
  display: flex;
  align-items: center;
  overflow: hidden;
  white-space: nowrap;
}
.span5 { grid-column: span 5; }
.span6 { grid-column: span 6; }
.grid-cell {
  border-right: 1px solid #d9d9d9;
  border-bottom: 1px solid #d9d9d9;
}
.selected {
  border: 2px solid #217346;
  margin: 0 -1px 0 -1px;
  position: relative;
  overflow: visible;
  z-index: 1;
}
.fill-handle {
  position: absolute;
  right: -4px;
  bottom: -4px;
  width: 5px;
  height: 5px;
  background: #217346;
  border: 1px solid #fff;
}
.title {
  background: #002060;
  color: #fff;
  border-bottom: 2px solid #000;
  justify-content: center;
  padding-top: 5px;
  font: 700 38px "Liberation Serif", serif;
  letter-spacing: 0.7px;
}
.impact {
  background: #4f6228;
  color: #fff;
  border-top: 1px solid #000;
  border-bottom: 2px solid #000;
  border-right: 2px solid #000;
  justify-content: center;
  font-weight: 700;
  font-size: 25px;
  letter-spacing: 0.25px;
  padding-top: 2px;
}
.spacer {
  background: #fff;
  border-right: 1px solid #d9d9d9;
}
.spacer.closed { border-bottom: 2px solid #000; }
.label {
  color: #fff;
  font-size: 15.500px;
  letter-spacing: 0.15px;
  padding: 3px 0 0 3px;
  border-right: 2px solid #000;
  border-bottom: 2px solid #000;
}
.brown { background: #974706; }
.red { background: #c00000; }
.value {
  background: #fff;
  color: #000;
  font-size: 14px;
  padding: 3px 3px 0 2px;
  border-right: 2px solid #000;
  border-bottom: 2px solid #000;
}
.value.num { justify-content: flex-end; }

/* vertical scrollbar */
.vscroll {
  flex: 1;
  display: flex;
  flex-direction: column;
  padding: 1px 3px 0 2px;
}
.arrow {
  height: 16px;
  background: #fff;
  border: 1px solid #c6c6c6;
  box-sizing: border-box;
  display: flex;
  align-items: center;
  justify-content: center;
  flex: none;
}
.thumb {
  height: 129px;
  background: #fff;
  border: 1px solid #c6c6c6;
  box-sizing: border-box;
  flex: none;
}
.track { flex: 1; }

/* sheet tabs */
.sheetbar {
  height: 23px;
  background: #e9e9e9;
  display: flex;
  align-items: flex-start;
  border-top: 1px solid #c6c6c6;
  box-sizing: border-box;
  flex: none;
}
.nav {
  width: 87px;
  height: 21px;
  display: flex;
  align-items: center;
  flex: none;
  color: #217346;
  font-weight: 700;
  border-right: 1px solid #c6c6c6;
  box-sizing: border-box;
}
.nav-l, .nav-r {
  width: 0;
  height: 0;
  border-style: solid;
  border-width: 4px 5px 4px 0;
  border-color: transparent #217346 transparent transparent;
  margin-left: 23px;
}
.nav-r { border-width: 4px 0 4px 5px; border-color: transparent transparent transparent #217346; margin-left: 19px; }
.nav span { margin-left: 19px; margin-top: -4px; }
.stabs { display: flex; margin-left: 1px; gap: 3px; flex: none; }
.stab {
  height: 20px;
  line-height: 13px;
  font-size: 13.700px;
  letter-spacing: -0.05px;
  color: #dde3ee;
  white-space: nowrap;
  box-sizing: border-box;
  overflow: hidden;
  text-align: center;
}
.stab.navy { background: #002060; width: 204px; }
.stab.purple { background: #7030a0; width: 86px; }
.stab.dark { background: #404040; width: 238px; }
.stab.active {
  background: linear-gradient(#fff, #ece9d8);
  color: #217346;
  font-weight: 700;
  font-size: 13.400px;
  width: 166px;
  height: 22px;
  border-bottom: 2px solid #217346;
  margin: 0 -1px;
}
.stab.sky {
  background: #558ed5;
  color: #14305f;
  width: 105px;
  padding-left: 14px;
  text-align: left;
  letter-spacing: -0.1px;
}
.more { margin-left: 8px; color: #555; font-weight: 700; line-height: 15px; flex: none; }
.add { margin-left: 10px; margin-top: 1px; flex: none; }
.sheetbar .grip { height: 15px; margin: 3px 12px 0 14px; }
.hscroll {
  display: flex;
  height: 14px;
  margin-top: 4px;
  width: 608px;
  background: #dcdcdc;
  flex: none;
}
.h-arrow {
  width: 16px;
  background: #fff;
  border: 1px solid #d0d0d0;
  box-sizing: border-box;
  display: flex;
  align-items: center;
  justify-content: center;
  flex: none;
}
.h-thumb { width: 538px; background: #fff; border: 1px solid #c6c6c6; box-sizing: border-box; flex: none; }
.h-track { flex: 1; }
.tri-h { width: 0; height: 0; border-style: solid; border-width: 4px 0 4px 4px; border-color: transparent transparent transparent #555; }
.tri-h.left { border-width: 4px 4px 4px 0; border-color: transparent #555 transparent transparent; }

/* status bar */
.status {
  height: 21px;
  background: #f1f1f1;
  display: flex;
  align-items: center;
  padding-left: 6px;
  font-size: 11px;
  letter-spacing: -0.3px;
  color: #444;
  flex: none;
}
.status > span { padding-top: 1px; }
.calc { margin-left: 14px; }
.views {
  margin-left: auto;
  display: flex;
  height: 21px;
}
.view {
  width: 35px;
  display: flex;
  align-items: center;
  justify-content: center;
}
.view.on { background: #c6c6c6; }
.zoom {
  display: flex;
  align-items: center;
  width: 169px;
  margin-right: 6px;
  padding-left: 5px;
  box-sizing: border-box;
}
.z-minus { width: 8px; height: 2px; background: #555; }
.slider {
  width: 106px;
  height: 1px;
  background: #b0b0b0;
  margin: 0 0 0 3px;
  position: relative;
}
.slider i {
  position: absolute;
  left: 50px;
  top: -5px;
  width: 5px;
  height: 11px;
  background: #666;
}
.z-plus {
  width: 9px;
  height: 9px;
  margin-left: 1px;
  background: linear-gradient(#555, #555) center / 9px 1.500px no-repeat, linear-gradient(#555, #555) center / 1.500px 9px no-repeat;
}
.zoom span { margin-left: 8px; font-size: 11px; }
.strip { height: 2px; background: #fff; flex: none; }
</style>
